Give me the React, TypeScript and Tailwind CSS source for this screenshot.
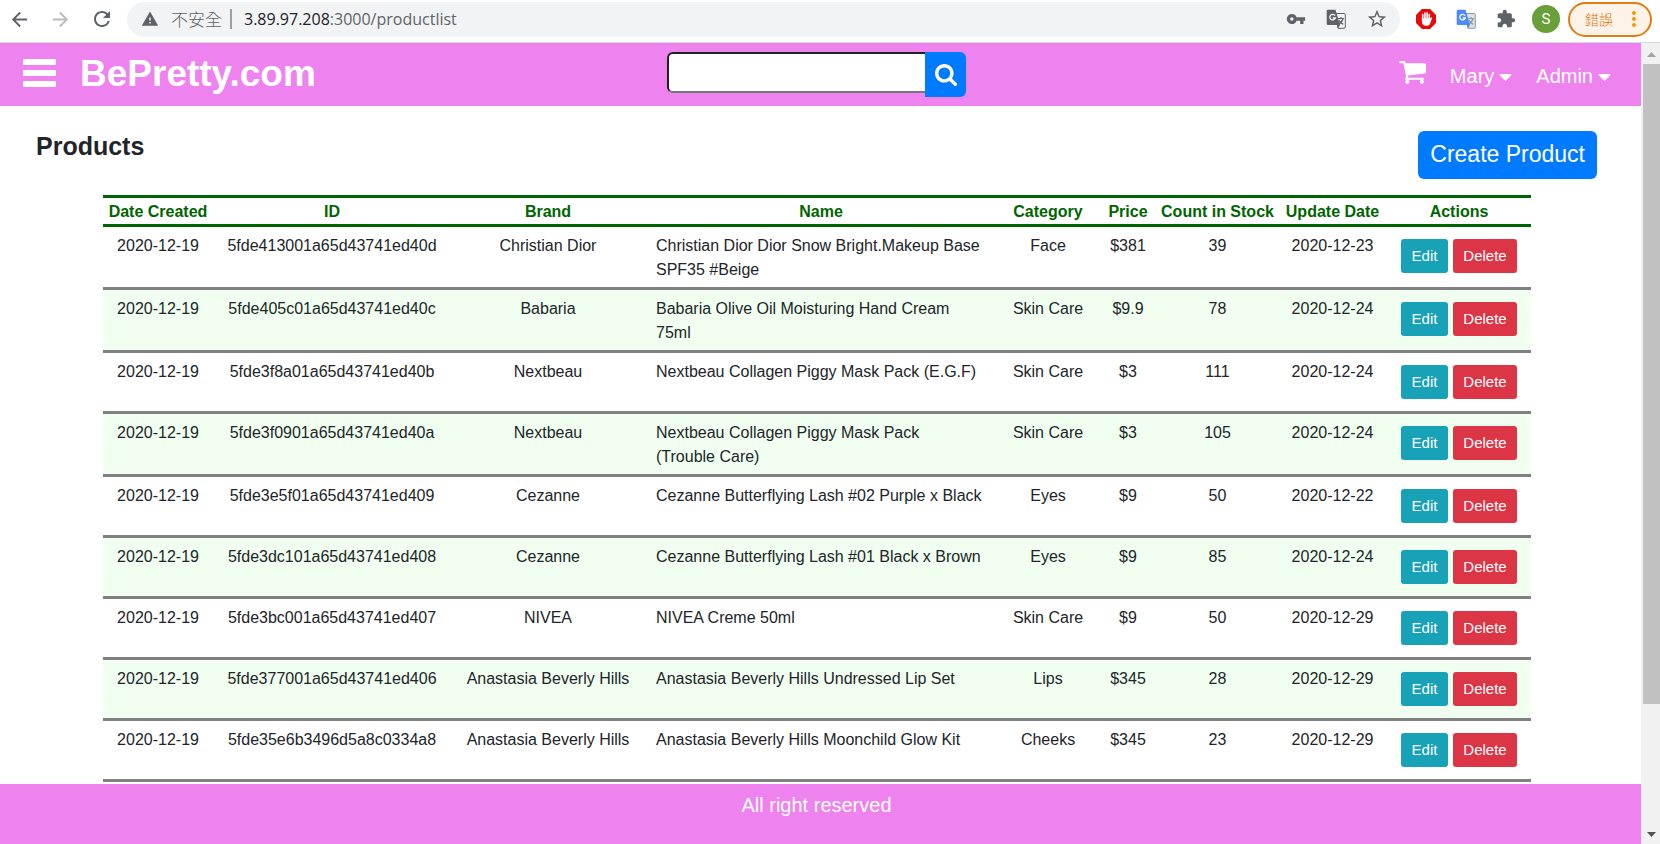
import { FaCaretDown } from "react-icons/fa";
import {
  MdArrowBack,
  MdArrowForward,
  MdRefresh,
  MdWarning,
  MdVpnKey,
  MdStarBorder,
  MdExtension,
  MdMoreVert,
} from "react-icons/md";

type Product = {
  created: string;
  id: string;
  brand: string;
  name: string;
  category: string;
  price: string;
  stock: number;
  updated: string;
};

const products: Product[] = [
  { created: "2020-12-19", id: "5fde413001a65d43741ed40d", brand: "Christian Dior", name: "Christian Dior Dior Snow Bright.Makeup Base SPF35 #Beige", category: "Face", price: "$381", stock: 39, updated: "2020-12-23" },
  { created: "2020-12-19", id: "5fde405c01a65d43741ed40c", brand: "Babaria", name: "Babaria Olive Oil Moisturing Hand Cream 75ml", category: "Skin Care", price: "$9.9", stock: 78, updated: "2020-12-24" },
  { created: "2020-12-19", id: "5fde3f8a01a65d43741ed40b", brand: "Nextbeau", name: "Nextbeau Collagen Piggy Mask Pack (E.G.F)", category: "Skin Care", price: "$3", stock: 111, updated: "2020-12-24" },
  { created: "2020-12-19", id: "5fde3f0901a65d43741ed40a", brand: "Nextbeau", name: "Nextbeau Collagen Piggy Mask Pack (Trouble\u00a0Care)", category: "Skin Care", price: "$3", stock: 105, updated: "2020-12-24" },
  { created: "2020-12-19", id: "5fde3e5f01a65d43741ed409", brand: "Cezanne", name: "Cezanne Butterflying Lash #02 Purple x Black", category: "Eyes", price: "$9", stock: 50, updated: "2020-12-22" },
  { created: "2020-12-19", id: "5fde3dc101a65d43741ed408", brand: "Cezanne", name: "Cezanne Butterflying Lash #01 Black x Brown", category: "Eyes", price: "$9", stock: 85, updated: "2020-12-24" },
  { created: "2020-12-19", id: "5fde3bc001a65d43741ed407", brand: "NIVEA", name: "NIVEA Creme 50ml", category: "Skin Care", price: "$9", stock: 50, updated: "2020-12-29" },
  { created: "2020-12-19", id: "5fde377001a65d43741ed406", brand: "Anastasia Beverly Hills", name: "Anastasia Beverly Hills Undressed Lip Set", category: "Lips", price: "$345", stock: 28, updated: "2020-12-29" },
  { created: "2020-12-19", id: "5fde35e6b3496d5a8c0334a8", brand: "Anastasia Beverly Hills", name: "Anastasia Beverly Hills Moonchild Glow Kit", category: "Cheeks", price: "$345", stock: 23, updated: "2020-12-29" },
];

const headings = ["Date Created", "ID", "Brand", "Name", "Category", "Price", "Count in Stock", "Update Date", "Actions"];

function TranslateIcon({ back, front, ink }: { back: string; front: string; ink: string }) {
  return (
    <svg viewBox="0 0 20 20" className="size-5" aria-hidden="true">
      <path d="M9 4.500h9a1.300 1.300 0 0 1 1.300 1.300v12.200a1.300 1.300 0 0 1-1.300 1.300h-6z" fill={back} stroke={ink} strokeWidth="1" />
      <path d="M12 9.500h6M15 8v1.500M17 9.500c-.6 2.600-2.400 4.600-4.600 5.800M13 11c.8 1.900 2.200 3.400 4.300 4.400" fill="none" stroke={ink} strokeWidth="1.200" />
      <path d="M2 .8h7.500l4.600 15.200H2A1.300 1.300 0 0 1 .7 14.700V2.100A1.300 1.300 0 0 1 2 .8z" fill={front} />
      <path d="M11 16h3.100l-2.100 3.200z" fill={front} />
      <path d="M9 6.600A2.800 2.800 0 1 0 9.300 9H6.800" fill="none" stroke="#fff" strokeWidth="1.300" />
    </svg>
  );
}

function BlockerIcon() {
  return (
    <svg viewBox="0 0 20 20" className="size-5" aria-hidden="true">
      <path d="M5.900 0h8.200L20 5.900v8.200L14.100 20H5.900L0 14.100V5.900z" fill="#e60b0b" />
      <path d="M6.700 5.500v6M8.900 4v7M11.100 4v7M13.300 5.500v6" fill="none" stroke="#fff" strokeWidth="1.600" strokeLinecap="round" />
      <path d="M5.900 9.500h8.200l1-1.100c.7-.3 1.200.1 1 .7l-2 5.400c-.5 1.400-1.500 2.200-3 2.200H9.600c-2.300 0-3.700-1.500-3.700-3.900z" fill="#fff" />
    </svg>
  );
}

function BarsIcon() {
  return (
    <svg viewBox="0 0 33 28" className="h-7 w-[33px]" fill="currentColor" aria-hidden="true">
      <rect width="33" height="6" rx="1" />
      <rect y="11" width="33" height="6" rx="1" />
      <rect y="22" width="33" height="6" rx="1" />
    </svg>
  );
}

function CartIcon() {
  return (
    <svg viewBox="64 256 1664 1408" className="h-[23px] w-[27px]" fill="currentColor" aria-hidden="true">
      <path d="M704 1536q0 52-38 90t-90 38-90-38-38-90 38-90 90-38 90 38 38 90zm896 0q0 52-38 90t-90 38-90-38-38-90 38-90 90-38 90 38 38 90zm128-1088v512q0 24-16.500 42.500t-40.500 21.500l-1044 122q13 60 13 70 0 16-24 64h920q26 0 45 19t19 45-19 45-45 19h-1024q-26 0-45-19t-19-45q0-11 8-31.500t16-36 21.500-40 15.500-29.500l-177-823h-204q-26 0-45-19t-19-45 19-45 45-19h256q16 0 28.500 6.500t19.500 15.500 13 24.500 8 26 5.500 29.500 4.500 26h1201q26 0 45 19t19 45z" />
    </svg>
  );
}

function SearchIcon() {
  return (
    <svg viewBox="64 128 1664 1664" className="size-[22px]" fill="currentColor" aria-hidden="true">
      <path d="M1216 832q0-185-131.500-316.500t-316.500-131.500-316.500 131.500-131.500 316.500 131.500 316.500 316.500 131.500 316.500-131.500 131.500-316.500zm512 832q0 52-38 90t-90 38q-54 0-90-38l-343-342q-179 124-399 124-143 0-273.500-55.500t-225-150-150-225-55.500-273.500 55.500-273.500 150-225 225-150 273.500-55.500 273.500 55.500 225 150 150 225 55.500 273.500q0 220-124 399l343 343q37 37 37 90z" />
    </svg>
  );
}

function BrowserBar() {
  return (
    <div className="flex h-[43px] shrink-0 items-center border-b border-[#d5d8dc] bg-white pb-1 pr-2 text-[#5f6368]">
      <nav aria-label="Browser" className="flex items-center gap-4 pl-[7px]">
        <button aria-label="Back" className="p-px"><MdArrowBack size={23} /></button>
        <button aria-label="Forward" className="p-px text-[#babcbe]"><MdArrowForward size={23} /></button>
        <button aria-label="Reload" className="p-px"><MdRefresh size={24} /></button>
      </nav>
      <div className="ml-3 flex h-[35px] flex-1 items-center rounded-full bg-[#f1f3f4] pl-[14px] pr-3">
        <MdWarning size={18} />
        <span className="ml-3 border-r-2 border-[#9aa0a6] pr-2 font-['Noto_Sans_CJK_TC',sans-serif] text-[17px] font-light leading-5">不安全</span>
        <span className="ml-3 flex-1 font-['Open_Sans',sans-serif] text-base leading-5">
          <span className="text-[#202124]">3.89.97.208</span>:3000/productlist
        </span>
        <div className="flex items-center gap-5">
          <button aria-label="Passwords"><MdVpnKey size={20} /></button>
          <button aria-label="Translate this page"><TranslateIcon back="#f1f3f4" front="#5f6368" ink="#5f6368" /></button>
          <button aria-label="Bookmark"><MdStarBorder size={22} /></button>
        </div>
      </div>
      <div className="flex items-center gap-5 pl-4">
        <button aria-label="Ad blocker"><BlockerIcon /></button>
        <button aria-label="Translate"><TranslateIcon back="#dfe1e3" front="#4c8bf5" ink="#8a9aa5" /></button>
        <button aria-label="Extensions"><MdExtension size={20} /></button>
      </div>
      <button aria-label="Profile" className="ml-4 size-7 rounded-full bg-[#689f38] font-['Roboto',sans-serif] text-[15px] leading-7 text-white">S</button>
      <button className="ml-2 flex h-[35px] w-[84px] items-center justify-between rounded-full border-2 border-[#e37c10] bg-[#fdf3e9] pl-[15px] pr-1 font-['Noto_Sans_CJK_TC',sans-serif] text-sm font-light text-[#e37400]">
        錯誤
        <MdMoreVert size={24} className="text-[#f29900]" />
      </button>
    </div>
  );
}

function SiteHeader() {
  return (
    <header className="grid h-[63px] shrink-0 grid-cols-[1fr_auto_1fr] bg-[#ee82ee] pr-2 text-white">
      <div className="flex items-start pl-[23px]">
        <button aria-label="Open menu" className="mt-4"><BarsIcon /></button>
        <a href="#home" className="ml-6 mt-1 text-[37px] font-bold leading-[54px]">BePretty.com</a>
      </div>
      <form className="flex items-start pt-[9px]" onSubmit={(e) => e.preventDefault()}>
        <input aria-label="Search products" className="h-[41px] w-[258px] rounded-l-md border-2 border-r-0 border-b-[#767676] border-l-[#212121] border-t-[#212121] bg-white px-2 text-xl text-[#212529] outline-none" />
        <button aria-label="Search" className="flex h-[45px] w-[41px] items-center justify-center rounded-r-md bg-[#007bff]"><SearchIcon /></button>
      </form>
      <div className="flex items-start justify-end gap-6 pr-[22px] text-xl">
        <a href="#cart" aria-label="Cart" className="pt-[18px]"><CartIcon /></a>
        <button className="mt-[18px] flex items-center gap-[5px] leading-[30px]">Mary<FaCaretDown className="h-[21px] w-[13px]" /></button>
        <button className="mt-[18px] flex items-center gap-[5px] leading-[30px]">Admin<FaCaretDown className="h-[21px] w-[13px]" /></button>
      </div>
    </header>
  );
}

function ProductTable() {
  return (
    <table className="w-full table-fixed border-collapse text-center text-base leading-6">
      <colgroup>
        <col className="w-[110px]" />
        <col className="w-[238px]" />
        <col className="w-[194px]" />
        <col className="w-[352px]" />
        <col className="w-[102px]" />
        <col className="w-[58px]" />
        <col className="w-[121px]" />
        <col className="w-[109px]" />
        <col className="w-[144px]" />
      </colgroup>
      <thead>
        <tr className="border-y-3 border-[#006400] text-[#006400]">
          {headings.map((h) => (
            <th key={h} scope="col" className="whitespace-nowrap pt-0.5 font-bold">{h}</th>
          ))}
        </tr>
      </thead>
      <tbody>
        {products.map((p) => (
          <tr key={p.id} className="border-b-3 border-[#808080] align-top even:bg-[#f0fff0]">
            <td className="pb-[5px] pt-[7px]">{p.created}</td>
            <td className="pb-[5px] pt-[7px]">{p.id}</td>
            <td className="pb-[5px] pt-[7px]">{p.brand}</td>
            <td className="pb-[5px] pl-[11px] pr-3 pt-[7px] text-left">{p.name}</td>
            <td className="pb-[5px] pt-[7px]">{p.category}</td>
            <td className="pb-[5px] pt-[7px]">{p.price}</td>
            <td className="pb-[5px] pt-[7px]">{p.stock}</td>
            <td className="pb-[5px] pt-[7px]">{p.updated}</td>
            <td className="py-3">
              <div className="flex justify-center gap-[5px]">
                <button className="h-[34px] w-[47px] rounded-[3px] bg-[#17a2b8] text-[15px] text-white">Edit</button>
                <button className="h-[34px] w-16 rounded-[3px] bg-[#dc3545] text-[15px] text-white">Delete</button>
              </div>
            </td>
          </tr>
        ))}
      </tbody>
    </table>
  );
}

function ScrollRail() {
  return (
    <div aria-hidden="true" className="flex w-[19px] shrink-0 flex-col items-center bg-[#f1f1f1] pl-0.5">
      <svg viewBox="0 0 17 21" className="h-[21px] w-[17px]"><path d="M4 14l4.500-5 4.500 5z" fill="#a3a3a3" /></svg>
      <div className="w-full grow-[640] bg-[#c1c1c1]" />
      <div className="grow-[119]" />
      <svg viewBox="0 0 17 21" className="h-[21px] w-[17px]"><path d="M4 9h9l-4.500 5z" fill="#505050" /></svg>
    </div>
  );
}

export default function App() {
  return (
    <div className="flex h-screen flex-col overflow-hidden bg-white font-['Liberation_Sans',Arial,sans-serif] text-[#212529]">
      <BrowserBar />
      <div className="flex min-h-0 flex-1">
        <div className="flex min-w-0 flex-1 flex-col">
          <SiteHeader />
          <main className="min-h-0 flex-1 overflow-hidden">
            <div className="flex items-start justify-between pl-9 pr-11 pt-[25px]">
              <h1 className="text-[25px] font-bold leading-[30px]">Products</h1>
              <button className="h-12 rounded-md bg-[#007bff] px-3 pb-0.5 text-[23px] text-white">Create Product</button>
            </div>
            <div className="pl-[103px] pr-[111px] pt-4">
              <ProductTable />
            </div>
          </main>
          <footer className="h-[60px] shrink-0 bg-[#ee82ee] pr-2 pt-[6px] text-center text-xl leading-[30px] text-white">All right reserved</footer>
        </div>
        <ScrollRail />
      </div>
    </div>
  );
}
